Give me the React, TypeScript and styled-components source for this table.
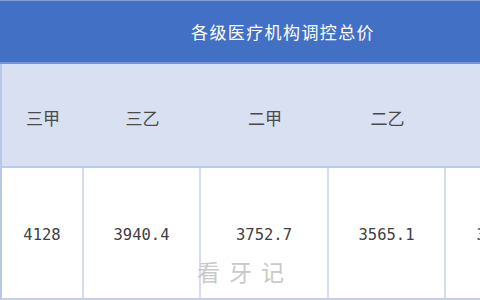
import React from "react";
import styled, { createGlobalStyle } from "styled-components";

const GlobalStyle = createGlobalStyle`
  html, body {
    margin: 0;
    padding: 0;
    background: #ffffff;
    overflow: hidden;
  }
`;

const Page = styled.div`
  width: 480px;
  height: 300px;
  overflow: hidden;
  position: relative;
  background: #ffffff;
`;

const Table = styled.div`
  width: 563px;
  display: grid;
  grid-template-columns: 82px 117px 128px 117px 117px;
  grid-template-rows: 64px 104px 130px;
  border-left: 2px solid #b9c7e8;
  border-bottom: 2px solid #c3cfe9;
`;

const Title = styled.div`
  grid-column: 1 / -1;
  display: flex;
  align-items: center;
  justify-content: center;
  background: #4270c5;
  border-top: 1px solid #7f9bd8;
  border-bottom: 2px solid #7895d4;
  margin-left: -2px;
  color: #ffffff;
  font-family: "Noto Sans CJK SC", "Noto Sans", sans-serif;
  font-size: 17px;
  letter-spacing: 1.4px;
  padding-left: 3px;
`;

const HeadCell = styled.div`
  display: flex;
  align-items: center;
  justify-content: center;
  background: #d9e0f1;
  border-bottom: 2px solid #bccaea;
  color: #4a4a4a;
  font-family: "Noto Sans CJK SC", "Noto Sans", sans-serif;
  font-size: 17px;
  padding-top: 4px;
`;

const ValueCell = styled.div<{ $last?: boolean }>`
  display: flex;
  align-items: center;
  justify-content: center;
  border-right: ${(p) => (p.$last ? "none" : "2px solid #d5ddf1")};
  color: #404040;
  font-family: "DejaVu Sans Mono", "Liberation Mono", monospace;
  font-size: 15.5px;
  padding-top: 3px;
`;

const Watermark = styled.div`
  position: absolute;
  left: 197px;
  top: 254px;
  color: #c9c9c9;
  font-family: "Noto Sans CJK SC", sans-serif;
  font-size: 23px;
  letter-spacing: 9px;
`;

const grades = ["三甲", "三乙", "二甲", "二乙", ""];
const prices = ["4128", "3940.4", "3752.7", "3565.1", "3377.5"];

export default () => {
  return (
    <Page>
      <GlobalStyle />
      <Table>
        <Title>各级医疗机构调控总价</Title>
        {grades.map((g, i) => (
          <HeadCell key={i}>{g}</HeadCell>
        ))}
        {prices.map((p, i) => (
          <ValueCell key={i} $last={i === prices.length - 1}>
            {p}
          </ValueCell>
        ))}
      </Table>
      <Watermark>看牙记</Watermark>
    </Page>
  );
};
